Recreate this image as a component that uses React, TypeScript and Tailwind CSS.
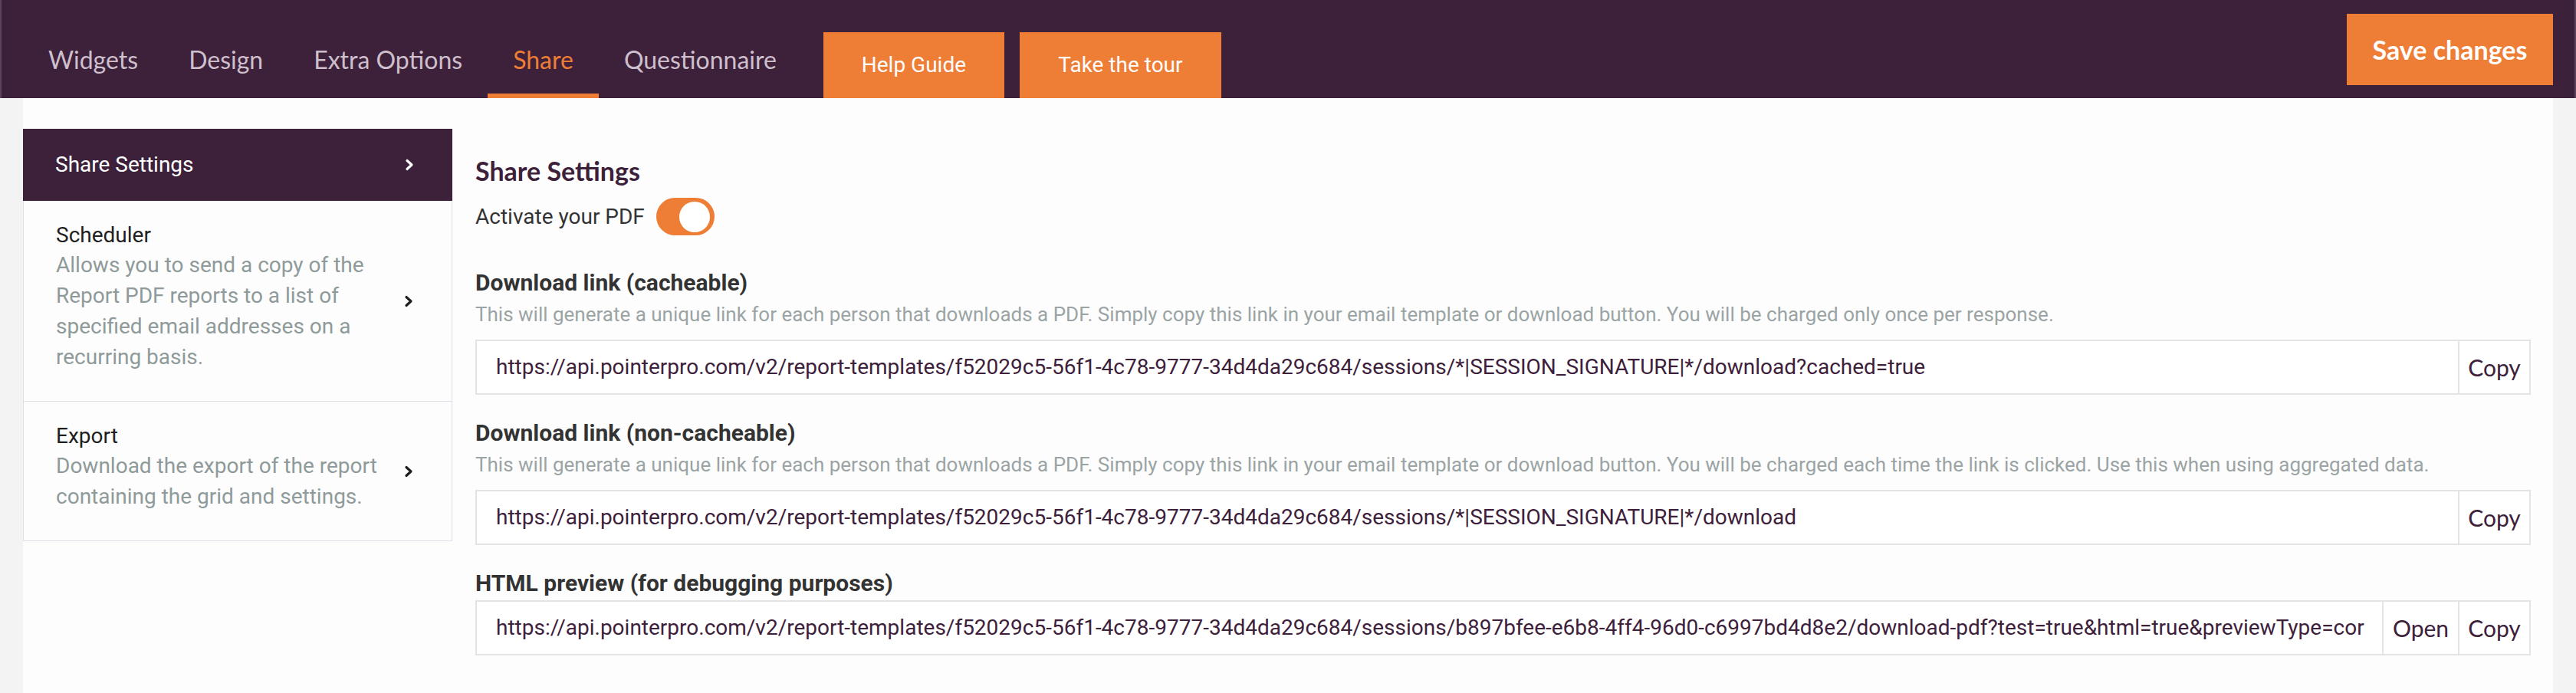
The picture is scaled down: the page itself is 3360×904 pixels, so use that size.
import React from 'react';

const tabs = ['Widgets', 'Design', 'Extra Options', 'Share', 'Questionnaire'];

const base = 'https://api.pointerpro.com/v2/report-templates/f52029c5-56f1-4c78-9777-34d4da29c684/sessions/';

function Chevron() {
  return (
    <svg width="12" height="16" viewBox="0 0 12 16" fill="none">
      <path d="M3 2.5L9 8L3 13.5" stroke="currentColor" strokeWidth="3.2" strokeLinecap="round" strokeLinejoin="round" />
    </svg>
  );
}

function SideItem({ title, desc }: { title: string; desc: string }) {
  return (
    <div className="flex items-center justify-between border-x border-b border-[#dde1e7] pl-[42px] pr-[50px] text-[#1f1f22]">
      <div className="w-[440px] pt-[26px] pb-[37px]">
        <div className="text-[28px] leading-[38px]">{title}</div>
        <div className="text-[28px] leading-[40px] text-[#8f9a9a]">{desc}</div>
      </div>
      <Chevron />
    </div>
  );
}

function LinkField({
  label,
  desc,
  url,
  open,
  first,
}: {
  label: string;
  desc?: string;
  url: string;
  open?: boolean;
  first?: boolean;
}) {
  return (
    <div>
      <div className={`${first ? 'mt-[46px]' : 'mt-[34px]'} text-[30px] leading-[32px] font-bold text-[#333333]`}>{label}</div>
      {desc && <div className="mt-[9px] text-[26px] leading-[32px] text-[#9ba4a4]">{desc}</div>}
      <div className={`${desc ? 'mt-[17px]' : 'mt-[6px]'} flex h-[72px] border-2 border-[#e4e4e4] bg-white`}>
        <div className="flex min-w-0 flex-1 items-center overflow-hidden whitespace-nowrap px-[25px] text-[28px] text-[#3d213b]">
          {url}
        </div>
        {open && (
          <div className="flex w-[99px] shrink-0 items-center justify-center border-l-2 border-[#e4e4e4] font-['Lato',sans-serif] text-[30px] text-[#3d213b]">
            Open
          </div>
        )}
        <div className="flex w-[93px] shrink-0 items-center justify-center border-l-2 border-[#e4e4e4] font-['Lato',sans-serif] text-[30px] text-[#3d213b]">
          Copy
        </div>
      </div>
    </div>
  );
}

export default function App() {
  return (
    <div className="flex min-h-screen flex-col overflow-hidden bg-[#f3f3f4] font-['Roboto',sans-serif]">
      <header className="flex h-[128px] border-x-2 border-[#5a4559] bg-[#3d213b] font-['Lato',sans-serif]">
        <nav className="flex h-full pl-[28px]">
          {tabs.map((t) =>
            t === 'Share' ? (
              <div key={t} className="flex items-center border-b-[6px] border-[#ee7d36] px-[33px] pt-[34px] text-[32px] text-[#ee7d36]">
                {t}
              </div>
            ) : (
              <div key={t} className="flex items-center border-b-[6px] border-transparent px-[33px] pt-[34px] text-[32px] text-[#cdbfcb]">
                {t}
              </div>
            )
          )}
        </nav>
        <div className="ml-[28px] flex items-end gap-[20px]">
          <button className="h-[86px] w-[236px] bg-[#ee7d36] font-['Roboto',sans-serif] text-[28px] text-white">Help Guide</button>
          <button className="h-[86px] w-[263px] bg-[#ee7d36] font-['Roboto',sans-serif] text-[28px] text-white">Take the tour</button>
        </div>
        <button className="ml-auto mr-[28px] mt-[18px] h-[93px] w-[269px] bg-[#ee7d36] text-[34px] font-bold text-white">
          Save changes
        </button>
      </header>

      <div className="flex min-w-0 flex-1 px-[30px]">
        <div className="flex min-w-0 flex-1 bg-[#fdfdfd] pt-[40px] pr-[29px]">
          <aside className="w-[560px] shrink-0 self-start">
            <div className="flex h-[94px] items-center justify-between bg-[#3d213b] pl-[42px] pr-[50px] text-[28px] text-white">
              <span>Share Settings</span>
              <Chevron />
            </div>
            <SideItem
              title="Scheduler"
              desc="Allows you to send a copy of the Report PDF reports to a list of specified email addresses on a recurring basis."
            />
            <SideItem title="Export" desc="Download the export of the report containing the grid and settings." />
          </aside>

          <main className="ml-[30px] min-w-0 flex-1 pt-[35px]">
            <h2 className="font-['Lato',sans-serif] text-[34px] font-bold leading-[40px] text-[#3d213b]">Share Settings</h2>
            <div className="mt-[15px] flex h-[49px] items-center gap-[15px]">
              <span className="text-[28px] text-[#333333]">Activate your PDF</span>
              <div className="flex h-[49px] w-[76px] items-center justify-end rounded-full bg-[#ee7d36] pr-[6px]">
                <div className="h-[40px] w-[40px] rounded-full bg-white" />
              </div>
            </div>

            <LinkField
              first
              label="Download link (cacheable)"
              desc="This will generate a unique link for each person that downloads a PDF. Simply copy this link in your email template or download button. You will be charged only once per response."
              url={base + '*|SESSION_SIGNATURE|*/download?cached=true'}
            />
            <LinkField
              label="Download link (non-cacheable)"
              desc="This will generate a unique link for each person that downloads a PDF. Simply copy this link in your email template or download button. You will be charged each time the link is clicked. Use this when using aggregated data."
              url={base + '*|SESSION_SIGNATURE|*/download'}
            />
            <LinkField
              open
              label="HTML preview (for debugging purposes)"
              url={base + 'b897bfee-e6b8-4ff4-96d0-c6997bd4d8e2/download-pdf?test=true&html=true&previewType=cor'}
            />
          </main>
        </div>
      </div>
    </div>
  );
}
